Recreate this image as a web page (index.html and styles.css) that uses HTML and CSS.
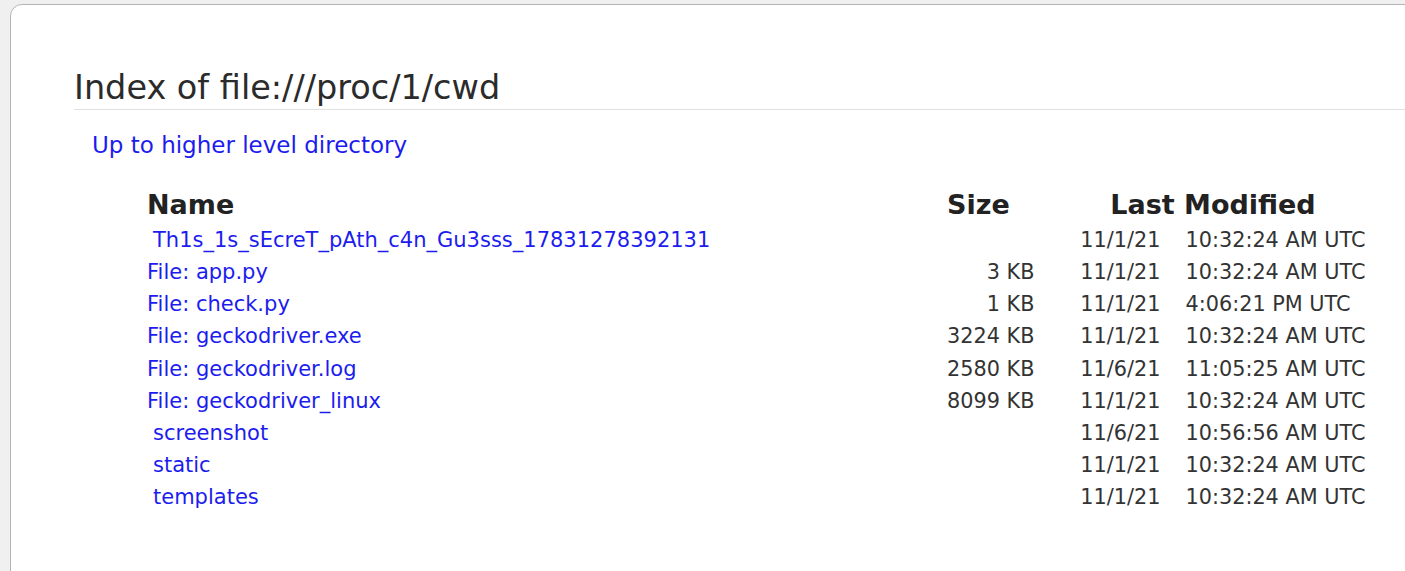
FILE: index.html
```html
<!DOCTYPE html>
<html>
<head>
<meta charset="utf-8">
<title>Index of file:///proc/1/cwd</title>
<link rel="stylesheet" href="styles.css">
</head>
<body>
<div class="card">
  <h1 class="title">Index of file:///proc/1/cwd</h1>
  <p class="up"><a href="#">Up to higher level directory</a></p>
  <table class="listing">
    <thead>
      <tr>
        <th class="c-name">Name</th>
        <th class="c-size">Size</th>
        <th class="c-mod" colspan="2">Last Modified</th>
      </tr>
    </thead>
    <tbody>
      <tr><td><a class="dir" href="#">Th1s_1s_sEcreT_pAth_c4n_Gu3sss_17831278392131</a></td><td class="sz"></td><td class="dt">11/1/21</td><td class="tm">10:32:24 AM UTC</td></tr>
      <tr><td><a href="#">File: app.py</a></td><td class="sz">3 KB</td><td class="dt">11/1/21</td><td class="tm">10:32:24 AM UTC</td></tr>
      <tr><td><a href="#">File: check.py</a></td><td class="sz">1 KB</td><td class="dt">11/1/21</td><td class="tm">4:06:21 PM UTC</td></tr>
      <tr><td><a href="#">File: geckodriver.exe</a></td><td class="sz">3224 KB</td><td class="dt">11/1/21</td><td class="tm">10:32:24 AM UTC</td></tr>
      <tr><td><a href="#">File: geckodriver.log</a></td><td class="sz">2580 KB</td><td class="dt">11/6/21</td><td class="tm">11:05:25 AM UTC</td></tr>
      <tr><td><a href="#">File: geckodriver_linux</a></td><td class="sz">8099 KB</td><td class="dt">11/1/21</td><td class="tm">10:32:24 AM UTC</td></tr>
      <tr><td><a class="dir" href="#">screenshot</a></td><td class="sz"></td><td class="dt">11/6/21</td><td class="tm">10:56:56 AM UTC</td></tr>
      <tr><td><a class="dir" href="#">static</a></td><td class="sz"></td><td class="dt">11/1/21</td><td class="tm">10:32:24 AM UTC</td></tr>
      <tr><td><a class="dir" href="#">templates</a></td><td class="sz"></td><td class="dt">11/1/21</td><td class="tm">10:32:24 AM UTC</td></tr>
    </tbody>
  </table>
</div>
</body>
</html>
```

FILE: styles.css
```css
html, body {
  margin: 0;
  padding: 0;
  height: 100%;
  overflow: hidden;
}
body {
  background: #f0f0f0;
  font-family: "DejaVu Sans", sans-serif;
  color: #333;
  padding: 4px 0 0 10px;
  box-sizing: border-box;
}
.card {
  background: #fff;
  border: 1px solid #b4b4b4;
  border-radius: 12px;
  min-height: 700px;
  margin-right: -40px;
  padding: 61px 0 0 63px;
}
.title {
  margin: 0;
  font-size: 33.5px;
  font-weight: normal;
  color: #2b2b2b;
  line-height: 43px;
  border-bottom: 1px solid #e0e0e0;
  padding-bottom: 0;
}
.up {
  margin: 0;
  padding: 20px 0 0 18px;
  font-size: 23px;
  line-height: 30px;
}
a {
  color: #1c1cee;
  text-decoration: none;
}
.listing {
  border-collapse: collapse;
  margin: 24px 0 0 73px;
  font-size: 20.8px;
}
.listing th, .listing td {
  padding: 0;
  white-space: nowrap;
}
.listing th {
  font-size: 27px;
  font-weight: bold;
  color: #222;
  height: 40px;
  vertical-align: middle;
}
.listing td {
  height: 32.15px;
}
.c-name {
  width: 800px;
  text-align: left;
}
.c-size {
  width: 87px;
  text-align: left;
}
.c-mod {
  text-align: center;
}
.sz {
  text-align: right;
}
.dt {
  width: 126px;
  text-align: right;
}
.tm {
  width: 206px;
  padding-left: 25px !important;
  text-align: left;
}
a.dir {
  padding-left: 6px;
}
.listing td a {
  font-size: 21px;
}
```
